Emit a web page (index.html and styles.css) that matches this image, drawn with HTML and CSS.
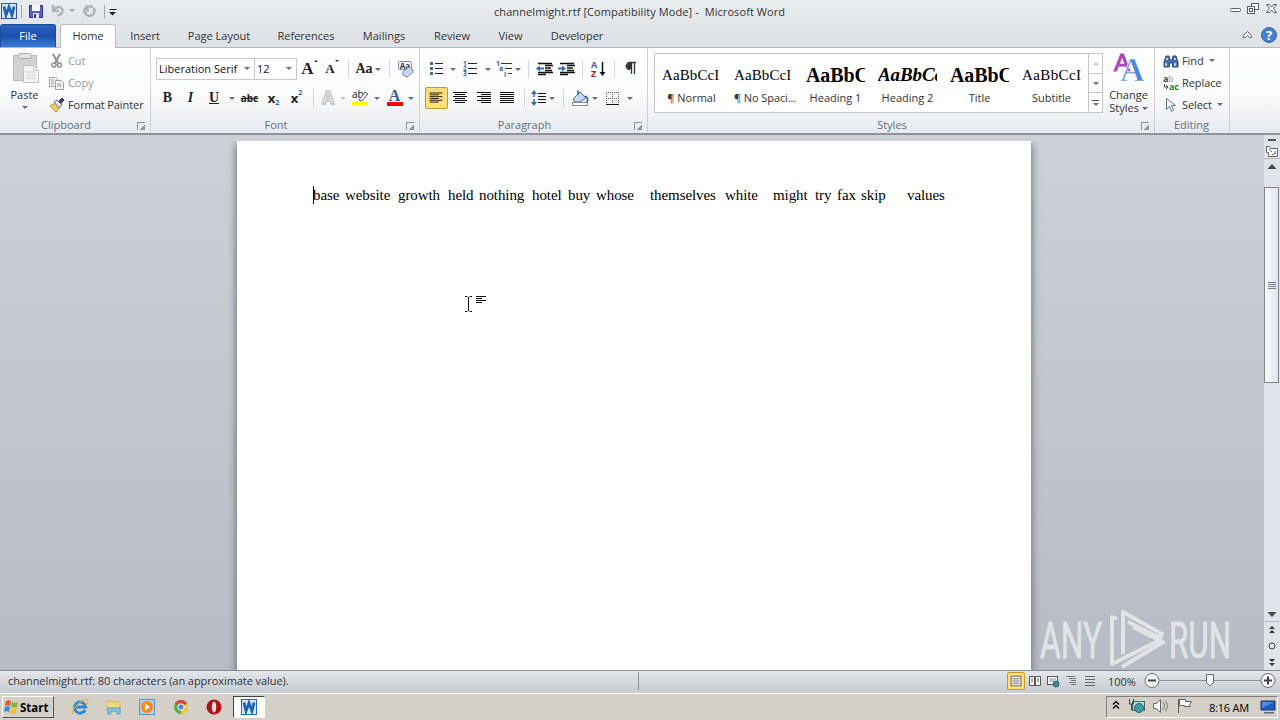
FILE: index.html
```
<!DOCTYPE html>
<html lang="en">
<head>
  <meta charset="UTF-8" />
  <title>channelmight.rtf [Compatibility Mode] - Microsoft Word</title>
  <link rel="stylesheet" href="styles.css">
</head>
<body>

  <header class="titlebar">
    <div class="quick">
      <svg width="120" height="24" viewBox="0 0 120 24">
        <rect x="1.5" y="3.5" width="15" height="15" fill="#d3e5f8" stroke="#2a5699"/>
        <path d="M4 6.500l2 8.500 3-8 3 8 2-8.500" fill="none" stroke="#1f62b8" stroke-width="2.800"/>
        <path d="M21.500 5v13M104.500 5v13" stroke="#a2a6ab"/>
        <path d="M29.500 5.500h13v12h-13z" fill="#5b5fc0" stroke="#35358c"/>
        <path d="M32 5h8v6h-8z" fill="#f4f6ff"/>
        <path d="M33 13h6v5h-6z" fill="#dfe3f4"/><path d="M34 14h2v4h-2z" fill="#35358c"/>
        <path d="M53 5v6h6M53.500 10.500c3-5 9-4 9 0 0 3-2 4-5 5.500" fill="none" stroke="#b0b3b7" stroke-width="2.500"/>
        <path d="M69 9h6l-3 3z" fill="#a6a9ad"/>
        <path d="M87 6.500a5 5 0 1 0 6.500 1.500M87.500 12V6.500H93" fill="none" stroke="#b0b3b7" stroke-width="2.500"/>
        <path d="M109.500 9.500h7" stroke="#222"/><path d="M109 12h7l-3.500 3.500z" fill="#222"/>
      </svg>
    </div>
    <div class="caption">channelmight.rtf [Compatibility Mode] -&nbsp; Microsoft Word</div>
    <svg class="winctl" width="52" height="24" viewBox="0 0 52 24" fill="#fff" stroke="#5a5f66">
      <rect x="2.500" y="8.500" width="10" height="3" rx="1"/>
      <rect x="23.500" y="3.500" width="7" height="6"/><rect x="19.500" y="6.500" width="7" height="7"/><rect x="21.500" y="8.500" width="3" height="3"/>
      <path d="M38.500 4.500h3l2 2.500 2-2.500h3l-3 4 3 4h-3l-2-2.500-2 2.500h-3l3-4z"/>
    </svg>
  </header>

  <nav class="tabs">
    <span class="tab file">File</span>
    <span class="tab home">Home</span>
    <span class="tab insert">Insert</span>
    <span class="tab layout">Page Layout</span>
    <span class="tab refs">References</span>
    <span class="tab mail">Mailings</span>
    <span class="tab review">Review</span>
    <span class="tab view">View</span>
    <span class="tab dev">Developer</span>
    <svg class="help" width="40" height="24" viewBox="0 0 40 24">
      <path d="M3.500 13.500v-2l4-4 4 4v2h-2l-2-2-2 2z" fill="#fff" stroke="#5a5f66"/>
      <circle cx="29" cy="11" r="7.500" fill="#4a7fd0" stroke="#3465ae"/>
      <text x="29" y="16" text-anchor="middle" font-size="13" font-weight="bold" fill="#fff">?</text>
    </svg>
  </nav>

  <!-- Ribbon -->
  <section class="ribbon">
    <div class="group clipboard">
      <div class="content">
        <div class="paste">
          <svg width="28" height="36" viewBox="0 0 28 36">
            <rect x="2.500" y="3.500" width="23" height="25" fill="#d2d2d2" stroke="#bcbcbc"/>
            <rect x="7.500" y="1.500" width="13" height="5" rx="2" fill="#e2e2e2" stroke="#a9a9a9"/>
            <path d="M12.500 13.500h10l5 5v12h-15z" fill="#f4f4f4" stroke="#c2c2c2"/>
            <path d="M22.500 13.500v5h5M15 20h9M15 23h10M15 26h10" fill="none" stroke="#d0d0d0"/>
          </svg>
          <span>Paste</span>
          <i class="arr"></i>
        </div>
        <div class="clips">
          <span class="cmd off"><svg width="16" height="16" viewBox="0 0 16 16" fill="none" stroke="#8f8f8f"><path d="M4 1l5 9M11 1l-5 9" stroke-width="2"/><circle cx="5" cy="12" r="2" stroke-width="1.500"/><circle cx="10.500" cy="12" r="2" stroke-width="1.500"/></svg>Cut</span>
          <span class="cmd off"><svg width="16" height="16" viewBox="0 0 16 16" fill="#f4f4f4" stroke="#a0a0a0"><path d="M.500 2.500h6l2 2v7h-8z"/><path d="M6.500 5.500h6l2 2v7h-8z"/><path d="M2 5h3M2 7h3M2 9h3M8 9h4M8 11h5"/></svg>Copy</span>
          <span class="cmd"><svg width="16" height="16" viewBox="0 0 16 16"><path d="M1 9l6-3 4 4-4 5z" fill="#f0d060" stroke="#b4953a"/><path d="M5 5l3-2 5 5-3 3z" fill="#e5e5ef" stroke="#6a6a80"/><path d="M10 4l3-3 2 2-3 3.500z" fill="#3a3a70" stroke="#3a3a70"/></svg>Format Painter</span>
        </div>
      </div>
      <div class="label"><span>Clipboard</span><b class="launch"></b></div>
    </div>

    <div class="group font">
      <div class="content rows">
        <div class="row">
          <span class="combo face">Liberation Serif<i class="arr"></i></span>
          <span class="combo size">12<i class="arr"></i></span>
          <span class="tool w25 serif big">A<i class="up"></i></span>
          <span class="tool w20 serif">A<i class="down"></i></span>
          <i class="sep w13"></i>
          <span class="tool w18 serif aa">Aa</span><i class="arr w10"></i>
          <i class="sep w13"></i>
          <svg width="18" height="18" viewBox="0 0 18 18"><rect x="2.500" y="1.500" width="13" height="8" rx="1" fill="#f4f7fc" stroke="#7b8fb5"/><text x="9" y="8.500" font-size="8" text-anchor="middle" font-weight="bold" fill="#333">Aa</text><path d="M7 12l6-5 4 3v2l-6 5-4-2z" fill="#c9d7f0" stroke="#7187b2"/></svg>
        </div>
        <div class="row">
          <span class="tool w23 serif bold">B</span>
          <span class="tool w23 serif bold ital">I</span>
          <span class="tool w24 serif bold und">U</span><i class="arr w11"></i>
          <span class="tool w25 strike">abc</span>
          <span class="tool w23 xs">x<sub>2</sub></span>
          <span class="tool w23 xs">x<sup>2</sup></span>
          <i class="sep w10"></i>
          <svg class="w20" width="20" height="18" viewBox="0 0 20 18"><text x="10" y="15" font-size="17" font-weight="bold" text-anchor="middle" fill="#fff" stroke="#c4c4c4" stroke-width="1.500">A</text></svg>
          <i class="arr w10 pale"></i>
          <svg class="w23" width="23" height="20" viewBox="0 0 23 20"><text x="4" y="10" font-size="10" fill="#111">ab</text><path d="M11 12l6-8 3 2-6 7z" fill="#eceff4" stroke="#51606f"/><path d="M4 14h16v4H4z" fill="#ff0"/></svg>
          <i class="arr w11"></i>
          <svg class="w24" width="24" height="20" viewBox="0 0 24 20"><text class="serif" x="12.500" y="13" font-size="16" font-weight="bold" text-anchor="middle" fill="#34598f">A</text><path d="M5 14h16v4H5z" fill="#f00"/></svg>
          <i class="arr w10"></i>
        </div>
      </div>
      <div class="label"><span>Font</span><b class="launch"></b></div>
    </div>

    <div class="group para">
      <div class="content rows">
        <div class="row">
          <svg class="w22" width="22" height="18" viewBox="0 0 22 18"><path d="M5 2h3v3H5zM5 7h3v3H5zM5 12h3v3H5z" fill="#4a6a9c"/><path d="M10 3.500h8M10 8.500h8M10 13.500h8" stroke="#222"/></svg>
          <i class="arr w11"></i>
          <svg class="w24" width="24" height="18" viewBox="0 0 24 18"><g font-size="6.500" font-weight="bold" fill="#3a5fc0"><text x="5" y="6">1</text><text x="5" y="11">2</text><text x="5" y="16">3</text></g><path d="M10 3.500h9M10 8.500h9M10 13.500h9" stroke="#222"/></svg>
          <i class="arr w11"></i>
          <svg class="w20" width="20" height="18" viewBox="0 0 20 18"><g font-size="7" font-weight="bold" fill="#3a5fa5"><text x="3" y="6">1</text><text x="6" y="11">a</text><text x="11" y="17">i</text></g><path d="M8 3.500h11M12 8.500h7M15 13.500h4" stroke="#333"/></svg>
          <i class="arr w10"></i>
          <i class="sep w10"></i>
          <svg class="w22" width="22" height="18" viewBox="0 0 22 18"><path d="M5 3.500h14M12 5.500h8M12 8h6M12 10.500h7M5 12.500h15M5 14.500h8" stroke="#111" stroke-width="1.300"/><path d="M3 8.500l4-3v2h4v2H7v2z" fill="#3667b4"/></svg>
          <svg class="w22" width="22" height="18" viewBox="0 0 22 18"><path d="M5 3.500h14M12 5.500h8M12 8h6M12 10.500h7M5 12.500h15M5 14.500h8" stroke="#111" stroke-width="1.300"/><path d="M11 8.500l-4-3v2H3v2h4v2z" fill="#3667b4"/></svg>
          <i class="sep w10"></i>
          <svg class="w22" width="22" height="18" viewBox="0 0 22 18"><g font-size="9" font-weight="bold"><text x="4" y="8" fill="#3460b0">A</text><text x="4" y="17" fill="#a52020">Z</text></g><path d="M15.500 2v12" stroke="#111" stroke-width="1.500"/><path d="M12.500 12h6l-3 4z" fill="#111"/></svg>
          <i class="sep w10"></i>
          <svg class="w24" width="24" height="18" viewBox="0 0 24 18"><path d="M11 9.500c-5 0-5-7 0-7h6M12.500 3v11M15.500 3v11" fill="none" stroke="#333" stroke-width="1.300"/><path d="M12 9H10.500C7 9 7 3 10.500 3H12z" fill="#333"/></svg>
        </div>
        <div class="row">
          <svg class="on" width="23" height="22" viewBox="0 0 23 22"><path d="M4 5.500h14M4 7.500h10M4 9.500h14M4 11.500h10M4 13.500h14M4 15.500h10" stroke="#111"/></svg>
          <svg width="24" height="22" viewBox="0 0 24 22"><path d="M5 5.500h14M7 7.500h10M5 9.500h14M7 11.500h10M5 13.500h14M7 15.500h10" stroke="#111"/></svg>
          <svg width="24" height="22" viewBox="0 0 24 22"><path d="M5 5.500h14M9 7.500h10M5 9.500h14M9 11.500h10M5 13.500h14M9 15.500h10" stroke="#111"/></svg>
          <svg width="23" height="22" viewBox="0 0 23 22"><path d="M4 5.500h14M4 7.500h14M4 9.500h14M4 11.500h14M4 13.500h14M4 15.500h14" stroke="#111"/></svg>
          <i class="sep w10"></i>
          <svg class="w18" width="18" height="20" viewBox="0 0 18 20"><path d="M5 4v12" stroke="#3a68b5" stroke-width="1.500" stroke-dasharray="5 2"/><path d="M2 6l3-4 3 4zM2 14l3 4 3-4z" fill="#3a68b5"/><path d="M9 5.500h8M9 8.500h8M9 11.500h8M9 14.500h8" stroke="#111"/></svg>
          <i class="arr w10"></i>
          <i class="sep w12"></i>
          <svg class="w21" width="21" height="20" viewBox="0 0 21 20"><path d="M4 11l7-7 6 6-6 4H6z" fill="#c3d6f0" stroke="#4b6a9c"/><path d="M9 7V2.500M16 8c3 1 3 4 2 6" fill="none" stroke="#35609f" stroke-width="1.600"/><rect x="3.500" y="14.500" width="15" height="3" fill="#fff" stroke="#8b8b8b"/></svg>
          <i class="arr w10"></i>
          <svg class="w26" width="26" height="20" viewBox="0 0 26 20"><path d="M6.500 4v12M12.500 4v12M18.500 4v12M6 4.500h13M6 10.500h13" stroke="#555" stroke-dasharray="1 1"/><path d="M6 16.500h13" stroke="#111"/></svg>
          <i class="arr w8"></i>
        </div>
      </div>
      <div class="label"><span>Paragraph</span><b class="launch"></b></div>
    </div>

    <div class="group styles">
      <div class="content">
        <div class="gallery">
          <div class="style"><b class="s-normal">AaBbCcI</b><span>¶ Normal</span></div>
          <div class="style"><b class="s-normal">AaBbCcI</b><span class="tight">¶ No Spaci...</span></div>
          <div class="style"><b class="s-head">AaBbC</b><span>Heading 1</span></div>
          <div class="style"><b class="s-head s-ital">AaBbCc</b><span>Heading 2</span></div>
          <div class="style"><b class="s-head">AaBbC</b><span>Title</span></div>
          <div class="style"><b class="s-normal s-sub">AaBbCcI</b><span>Subtitle</span></div>
          <div class="spin">
            <span><i class="tri-up"></i></span>
            <span><i class="arr"></i></span>
            <span><i class="bar"></i><i class="arr"></i></span>
          </div>
        </div>
        <div class="change">
          <svg width="32" height="32" viewBox="0 0 32 32"><g font-weight="bold" font-family="Liberation Serif"><text x="1" y="18" font-family="Liberation Sans" font-weight="normal" font-size="24" fill="#ad45b8" stroke="#ad45b8">A</text><text x="7" y="28" font-size="34" fill="#4b87d6" stroke="#fff" stroke-width=".6">A</text></g></svg>
          <span>Change</span>
          <span>Styles <i class="arr"></i></span>
        </div>
      </div>
      <div class="label"><span>Styles</span><b class="launch"></b></div>
    </div>

    <div class="group editing">
      <div class="content clips">
        <span class="cmd"><svg width="16" height="16" viewBox="0 0 16 16"><path d="M1 14V9l2-6h3l1 4h2l1-4h3l2 6v5H9.500v-4h-3v4z" fill="#456da8" stroke="#2c4d80"/><path d="M3 10v3M12 10v3M4 5v2M12 5v2" stroke="#dce8f8" stroke-width="1.500"/></svg>Find<i class="arr"></i></span>
        <span class="cmd"><svg width="16" height="16" viewBox="0 0 16 16" font-size="9" font-weight="bold"><text x="0" y="7" fill="#444">a</text><text x="5" y="7" fill="#bbb">b</text><text x="6" y="15" fill="#2d7d32">ac</text><path d="M1.500 9v3h3M3 10l2 2-2 2" fill="none" stroke="#444"/></svg>Replace</span>
        <span class="cmd"><svg width="16" height="16" viewBox="0 0 16 16"><path d="M3.500 1.500v11l3-3 2 5 2-1-2-5h4z" fill="#fff" stroke="#5874a0"/></svg>Select<i class="arr"></i></span>
      </div>
      <div class="label"><span>Editing</span></div>
    </div>
  </section>

  <!-- Document area -->
  <main class="workspace">
    <div class="page">
      <p class="line"><span>base</span><span>website</span><span>growth</span><span>held</span><span>nothing</span><span>hotel</span><span>buy</span><span>whose</span><span>themselves</span><span>white</span><span>might</span><span>try</span><span>fax</span><span>skip</span><span>values</span></p>
      <i class="caret"></i>
      <svg class="pointer" width="24" height="18" viewBox="0 0 24 18" fill="none" stroke="#111"><path d="M1 1.500h2.500M5.500 1.500H8M4.500 2v14M1 16.500h2.500M5.500 16.500H8M12 1.500h10M12 3.500h6M12 5.500h10M12 7.500h6"/></svg>
    </div>
    <svg class="watermark" width="200" height="62" viewBox="0 0 200 62">
      <g font-size="50" fill="#e1e3e7" stroke="#e1e3e7" stroke-width=".8">
        <text x="4" y="51" textLength="62" lengthAdjust="spacingAndGlyphs">ANY</text>
        <text x="133" y="51" textLength="62" lengthAdjust="spacingAndGlyphs">RUN</text>
      </g>
      <path d="M81 12l-5-2v47l46-23M87 47V5l39 22-2 4-32-16M97 20l30 15-41 25" fill="none" stroke="#e1e3e7" stroke-width="4" stroke-linejoin="round"/>
    </svg>
    <div class="scroll">
      <svg width="16" height="45" viewBox="0 0 16 45">
        <path d="M0 23.500h16" stroke="#b6bac0"/><path d="M4 4h8v2H4z" fill="#555"/>
        <path d="M2.500 11.500h3l1 2h7v8h-9v-4h-2z" fill="#fff" stroke="#666"/><path d="M5 14l3 3M11 16v3M8 20l4-2" stroke="#666"/>
        <path d="M8 29l4.500 5h-9z" fill="#444"/>
      </svg>
      <div class="thumb"><i></i></div>
      <svg class="foot" width="16" height="64" viewBox="0 0 16 64">
        <path d="M3.500 6h9l-4.500 5z" fill="#444"/><path d="M0 15.500h16" stroke="#b6bac0"/>
        <path d="M5 23l3-3 3 3zM5 27l3-3 3 3zM5 53l3 3 3-3zM5 57l3 3 3-3z" fill="#333"/>
        <circle cx="8" cy="40" r="3" fill="none" stroke="#444"/>
      </svg>
    </div>
  </main>

  <footer class="status">
    <span class="info">channelmight.rtf: 80 characters (an approximate value).</span>
    <div class="views">
      <svg class="on" width="18" height="18" viewBox="0 0 18 18"><rect x="3.500" y="3.500" width="11" height="11" fill="#fff" stroke="#555"/><path d="M5 6h8M5 8h8M5 10h8M5 12h8" stroke="#777"/></svg>
      <svg width="18" height="18" viewBox="0 0 18 18" fill="#fff" stroke="#555"><path d="M3.500 4.500h5v9h-5zM9.500 4.500h5v9h-5z"/><path d="M5 7h2M5 9h2M11 7h2M11 9h2M8 13l1 1 1-1"/></svg>
      <svg width="18" height="18" viewBox="0 0 18 18"><rect x="3.500" y="4.500" width="10" height="8" fill="#fff" stroke="#555"/><path d="M5 7h7M5 9h6" stroke="#888"/><circle cx="12" cy="12" r="3" fill="#3d8b8e" stroke="#28639a"/></svg>
      <svg width="18" height="18" viewBox="0 0 18 18"><path d="M3 4.500h9M6 6.500h7M8 8.500h5M6 10.500h7M8 12.500h5" stroke="#777"/></svg>
      <svg width="18" height="18" viewBox="0 0 18 18"><path d="M4 4.500h10M4 7.500h10M4 10.500h10M4 13.500h10" stroke="#666"/></svg>
    </div>
    <span class="zoom">100%</span>
    <svg class="slider" width="134" height="20" viewBox="0 0 134 20">
      <path d="M17 9.500h100" stroke="#8b9097"/>
      <g fill="#f4f5f7" stroke="#6a6e74"><circle cx="9" cy="9.500" r="7"/><circle cx="125" cy="9.500" r="7"/><path d="M63.500 3.500h7v8l-3.500 3.500-3.500-3.500z"/></g>
      <path d="M5 9.500h8M121 9.500h8M125 5.500v8" stroke="#444" stroke-width="2"/>
    </svg>
  </footer>

  <div class="taskbar">
    <div class="start">
      <svg width="17" height="16" viewBox="0 0 17 16"><path d="M3 2c2-1 4-1 5 0L7 7c-2-1-3-1-5 0z" fill="#e2592c"/><path d="M9 3c2 1 4 1 6 0l-1 5c-2 1-4 1-6 0z" fill="#7ab53c"/><path d="M2 8c2-1 3-1 5 0l-1 5c-2-1-4-1-5 0z" fill="#3f86d4"/><path d="M8 9c2 1 4 1 6 0l-1 5c-2 1-4 1-6 0z" fill="#f2bd2c"/></svg>
      Start
    </div>
    <div class="apps">
      <svg width="18" height="18" viewBox="0 0 18 18"><path d="M14 12a5.500 5.500 0 1 1 .5-3H5" fill="none" stroke="#2b8bd8" stroke-width="3"/><path d="M2 16C-1 13 11 0 16 2c2 1 0 4-1 5" fill="none" stroke="#e5b52e" stroke-width="1.200"/></svg>
      <svg width="18" height="18" viewBox="0 0 18 18"><path d="M2 3h5l1 1h7v9H2z" fill="#f4d97c" stroke="#d4b556"/><path d="M3 16v-6h12v6h-3v-3H6v3z" fill="#8ac7e6" stroke="#5f9ec2"/></svg>
      <svg width="18" height="18" viewBox="0 0 18 18"><rect x="1.500" y="1.500" width="15" height="15" fill="#a9cfec" stroke="#5c97c7"/><circle cx="9" cy="9" r="6" fill="#f28a1c"/><path d="M7 5.500l5 3.500-5 3.500z" fill="#fff"/></svg>
      <svg width="18" height="18" viewBox="0 0 18 18"><circle cx="9" cy="9" r="7" fill="#5aac46"/><path d="M9 9L2.900 5.500A7 7 0 0 1 15.100 5.500z" fill="#dc4335"/><path d="M9 9l6.100-3.500A7 7 0 0 1 9 16z" fill="#f8c92f"/><circle cx="9" cy="9" r="3.200" fill="#4a87ea" stroke="#fff"/></svg>
      <svg width="18" height="18" viewBox="0 0 18 18"><circle cx="9" cy="9" r="7.500" fill="#b31018"/><ellipse cx="9" cy="9" rx="2.200" ry="5.500" fill="#eee2dc"/></svg>
    </div>
    <div class="active-app">
      <svg width="18" height="18" viewBox="0 0 18 18"><rect x="1.500" y="1.500" width="15" height="15" fill="#d3e5f8" stroke="#2a6bbf"/><path d="M4 4.500l2 8.500 3-8 3 8 2-8.500" fill="none" stroke="#1f62b8" stroke-width="2.800"/></svg>
    </div>
    <div class="tray">
      <svg width="98" height="20" viewBox="0 0 98 20">
        <path d="M6 7.500l3-3 3 3M6 11.500l3-3 3 3" fill="none" stroke="#111" stroke-width="1.500"/>
        <rect x="25.500" y="4.500" width="12" height="9" fill="#a9dce0" stroke="#4c6670"/><circle cx="32" cy="11" r="4.500" fill="#3c9fa5" stroke="#27666c"/><path d="M22.500 2v5h4V2M24.500 7v6" fill="none" stroke="#444"/>
        <path d="M46.500 6.500h3l4-4v13l-4-4h-3z" fill="#fff" stroke="#666"/><path d="M56 5c2 3 2 5 0 8M58.500 3.500c2.500 4 2.500 7 0 11" fill="none" stroke="#777"/>
        <path d="M71.500 2v14" stroke="#555"/><path d="M72.500 2.500h6v2h6l-2 3 1 2h-6v-1h-5z" fill="#fff" stroke="#666"/>
      </svg>
      <span>8:16 AM</span>
      <svg width="18" height="18" viewBox="0 0 18 18"><path d="M2 3h14v9H2z" fill="#1e5dc0" stroke="#22375e"/><path d="M3 4h12L3 10z" fill="#4d8be4"/><path d="M5 14h10v1.500H5z" fill="#5d6d85"/></svg>
    </div>
  </div>

</body>
</html>
```
FILE: styles.css
```
* {
  margin: 0;
  padding: 0;
  box-sizing: border-box;
}

body {
  width: 1280px;
  height: 720px;
  overflow: hidden;
  display: flex;
  flex-direction: column;
  font-family: 'Open Sans', sans-serif;
  font-size: 11px;
  color: #333;
  background: #d4d0c8;
}

svg {
  display: block;
  flex-shrink: 0;
}

i {
  font-style: normal;
}

.serif {
  font-family: 'Liberation Serif', serif;
}

/* === Title bar === */
.titlebar {
  height: 24px;
  display: flex;
  justify-content: space-between;
  background: linear-gradient(#e9edf0, #e2e6e9);
}

.quick {
  width: 494px;
}

.caption {
  flex: 1;
  line-height: 24px;
  letter-spacing: 0.08px;
}

/* === Tabs === */
.tabs {
  height: 24px;
  display: flex;
  background: linear-gradient(#e2e6e9, #dde1e5);
  border-bottom: 1px solid #b4b8be;
}

.tab {
  line-height: 24px;
  text-align: center;
}

.file {
  width: 56px;
  color: #fff;
  background: linear-gradient(#2b62c0, #1d50ab 50%, #3a7bdd);
  border: 1px solid #1c4ba0;
  border-bottom: 0;
  border-radius: 3px 3px 0 0;
  line-height: 22px;
}

.home {
  width: 56px;
  height: 24px;
  margin-left: 4px;
  background: #fff;
  border: 1px solid #b9bdc3;
  border-bottom: 0;
  border-radius: 3px 3px 0 0;
  line-height: 22px;
}

.insert { width: 58px; }
.layout { width: 90px; }
.refs { width: 84px; }
.mail { width: 72px; }
.review { width: 64px; }
.view { width: 53px; }
.dev { width: 80px; }

.help {
  margin-left: auto;
}

/* === Ribbon === */
.ribbon {
  height: 87px;
  display: flex;
  background: linear-gradient(#fff, #fbfcfd 50%, #e6eaef);
  border-bottom: 2px solid #8e939b;
}

.group {
  display: flex;
  flex-direction: column;
  border-right: 1px solid #cdd1d6;
}

.clipboard { width: 151px; }
.font { width: 269px; }
.para { width: 228px; }
.styles { width: 507px; }
.editing { width: 75px; }

.content {
  height: 68px;
  display: flex;
}

.label {
  display: flex;
  height: 17px;
  padding-right: 5px;
  align-items: center;
  color: #66707a;
}

.label span {
  flex: 1;
  padding-left: 4px;
  text-align: center;
  line-height: 15px;
}

.launch {
  width: 8px;
  height: 8px;
  margin-top: 2px;
  border-top: 1px solid #8d939a;
  border-left: 1px solid #8d939a;
  background: linear-gradient(135deg, transparent 60%, #8d939a 60%);
}

/* The corner button takes its width back from the caption */
.label span:not(:last-child) {
  padding-left: 0;
  padding-right: 5px;
}

.arr {
  display: inline-flex;
  justify-content: center;
  align-items: center;
  flex-shrink: 0;
}

.arr::before {
  content: '';
  border: 3px solid transparent;
  border-top-color: #6a6f75;
  border-bottom: 0;
}

.pale::before {
  border-top-color: #c0c3c6;
}

.sep {
  display: flex;
  justify-content: center;
}

.sep::before {
  content: '';
  width: 1px;
  height: 18px;
  background: #d3d6da;
}

.w8 { width: 8px; }
.w10 { width: 10px; }
.w11 { width: 11px; }
.w12 { width: 12px; }
.w13 { width: 13px; }
.w18 { width: 18px; }
.w20 { width: 20px; }
.w21 { width: 21px; }
.w22 { width: 22px; }
.w23 { width: 23px; }
.w24 { width: 24px; }
.w25 { width: 25px; }
.w26 { width: 26px; }

.paste {
  width: 49px;
  padding-top: 4px;
  display: flex;
  flex-direction: column;
  align-items: center;
}

.paste span {
  margin-top: -1px;
  margin-bottom: 4px;
  line-height: 15px;
}

.clips {
  flex-direction: column;
  display: flex;
  padding-top: 2px;
}

.cmd {
  height: 22px;
  padding-bottom: 1px;
  display: flex;
  align-items: center;
  gap: 3px;
  white-space: nowrap;
  letter-spacing: -0.08px;
}

.off {
  color: #999;
}

.rows {
  flex-direction: column;
  padding: 10px 0 0 5px;
  gap: 7px;
}

.row {
  height: 22px;
  display: flex;
  align-items: center;
}

.combo {
  height: 22px;
  padding: 0 4px 1px 2px;
  display: flex;
  align-items: center;
  justify-content: space-between;
  border: 1px solid #c6cacf;
  background: #fff;
  color: #111;
}

.face { width: 99px; }
.size { width: 43px; margin-left: -1px; }

.tool {
  display: flex;
  justify-content: center;
  align-items: center;
  flex-shrink: 0;
  line-height: 18px;
  color: #222;
}

.big { font-size: 17px; font-weight: bold; }
.tool.w20 { font-size: 13px; font-weight: bold; }
.tool.aa { font-size: 14px; font-weight: bold; }
.bold { font-size: 14px; font-weight: bold; }
.ital { font-style: italic; }
.und { text-decoration: underline; }
.strike { text-decoration: line-through; font-weight: bold; font-size: 10px; }
.xs { font-weight: bold; font-size: 13px; }

.xs sub,
.xs sup {
  font-size: 7px;
  line-height: 8px;
  color: #3460b0;
}

.xs sub { align-self: flex-end; }
.xs sup { align-self: flex-start; }

.up,
.down {
  align-self: flex-start;
  border: 2.5px solid transparent;
}

.up { border-bottom-color: #333; border-top: 0; }
.down { border-top-color: #333; border-bottom: 0; }

.on {
  border: 1px solid #c29b29;
  border-radius: 2px;
  background: linear-gradient(#fbdb7c, #ffe575);
}

/* === Style gallery === */
.gallery {
  width: 449px;
  height: 60px;
  margin: 5px 0 0 6px;
  display: flex;
  border: 1px solid #c3c7cc;
  background: #fff;
}

.style {
  width: 72px;
  padding: 11px 6px 0 7px;
  text-align: center;
}

.style b {
  display: block;
  width: 59px;
  height: 21px;
  overflow: hidden;
  text-align: left;
  color: #000;
  line-height: 20px;
  font-family: 'Liberation Serif', serif;
}

.style span {
  display: block;
  line-height: 24px;
  white-space: nowrap;
}

.style .tight {
  letter-spacing: -0.1px;
}

.style .s-normal { font-size: 15px; font-weight: normal; letter-spacing: 0.1px; }
.style .s-sub { letter-spacing: 0.4px; }
.style .s-head { font-size: 20px; letter-spacing: -0.1px; }
.style .s-ital { font-style: italic; font-size: 19px; }

.spin {
  width: 14px;
  margin-left: auto;
  display: flex;
  flex-direction: column;
  border-left: 1px solid #c3c7cc;
}

.spin span {
  flex: 1;
  display: flex;
  flex-direction: column;
  gap: 2px;
  align-items: center;
  justify-content: center;
  border-bottom: 1px solid #c3c7cc;
}

.spin span:last-child {
  border-bottom: 0;
}

.bar {
  width: 7px;
  height: 1px;
  background: #555;
}

.tri-up {
  border: 3px solid transparent;
  border-bottom-color: #c3c7cc;
  border-top: 0;
}

.change {
  flex: 1;
  padding-top: 5px;
  display: flex;
  flex-direction: column;
  align-items: center;
  line-height: 13px;
}

.change svg {
  margin-bottom: 3px;
}

.change .arr {
  vertical-align: 2px;
}

.editing .clips {
  padding-left: 8px;
}

.editing .arr {
  margin-left: 2px;
}

/* === Workspace === */
.workspace {
  height: 535px;
  padding-top: 6px;
  position: relative;
  display: flex;
  background: linear-gradient(#cdd1d7, #b7bbc3);
}

.page {
  width: 794px;
  margin-left: 237px;
  padding: 44px 0 0 76px;
  position: relative;
  background: #fff;
  box-shadow: 0 4px 8px 1px #6f747c;
  clip-path: inset(0 -10px 0 -10px);
}

.line {
  display: flex;
  font: 15px/20px 'Liberation Serif', serif;
  letter-spacing: -0.08px;
  color: #000;
}

/* Word slots follow the spacing typed in the document */
.line span { width: 32px; }
.line span:nth-child(2) { width: 53px; }
.line span:nth-child(3) { width: 50px; }
.line span:nth-child(4) { width: 31px; }
.line span:nth-child(5) { width: 53px; }
.line span:nth-child(6) { width: 36px; }
.line span:nth-child(7) { width: 28px; }
.line span:nth-child(8) { width: 54px; }
.line span:nth-child(9) { width: 75px; }
.line span:nth-child(10) { width: 48px; }
.line span:nth-child(11) { width: 42px; }
.line span:nth-child(12) { width: 22px; }
.line span:nth-child(13) { width: 24px; }
.line span:nth-child(14) { width: 46px; }
.line span:nth-child(15) { width: 38px; }

.caret {
  position: absolute;
  left: 76px;
  top: 45px;
  width: 1px;
  height: 18px;
  background: #000;
}

.pointer {
  position: absolute;
  left: 227px;
  top: 154px;
}

.watermark {
  position: absolute;
  left: 1036px;
  top: 472px;
  font-family: Roboto, sans-serif;
}

.scroll {
  width: 16px;
  margin: -6px 0 0 auto;
  display: flex;
  flex-direction: column;
  background: #dfe3ea;
}

.thumb {
  width: 15px;
  height: 196px;
  margin-top: 7px;
  display: flex;
  align-items: center;
  justify-content: center;
  border: 1px solid #81868e;
  background: linear-gradient(90deg, #fafbfd, #dfe3ec);
}

.thumb i {
  width: 8px;
  height: 7px;
  background: repeating-linear-gradient(#7a7f87 0 1px, transparent 1px 2px);
}

.foot {
  margin-top: auto;
}

/* === Status bar === */
.status {
  height: 23px;
  padding: 0 3px 2px 8px;
  display: flex;
  align-items: center;
  border-top: 1px solid #868a91;
  background: linear-gradient(#e3e6ea, #c6cad1);
}

.info {
  width: 631px;
  line-height: 18px;
  letter-spacing: -0.06px;
  border-right: 1px solid #8e9298;
}

.views {
  width: 101px;
  margin-left: 368px;
  display: flex;
}

.views svg {
  margin-right: 0.5px;
}

.zoom {
  width: 34px;
}

.slider {
  margin-left: auto;
}

/* === Taskbar === */
.taskbar {
  height: 27px;
  padding: 2px 2px 2px 2px;
  display: flex;
  border-top: 1px solid #fff;
  color: #000;
}

.start {
  width: 52px;
  display: flex;
  align-items: center;
  font-weight: bold;
  font-size: 11.5px;
  border: 1px solid;
  border-color: #fff #555 #555 #fff;
}

.apps {
  width: 179px;
  padding-left: 17px;
  display: flex;
  align-items: center;
  gap: 15.5px;
}

.active-app {
  width: 32px;
  display: flex;
  align-items: center;
  justify-content: center;
  border: 1px solid;
  border-color: #444 #fff #fff #444;
  background: #fff;
}

.tray {
  width: 172px;
  margin-left: auto;
  display: flex;
  align-items: center;
  border: 1px solid;
  border-color: #808080 #fff #fff #808080;
}

.tray span {
  width: 54px;
  padding-left: 4px;
  white-space: nowrap;
  letter-spacing: -0.2px;
}
```
